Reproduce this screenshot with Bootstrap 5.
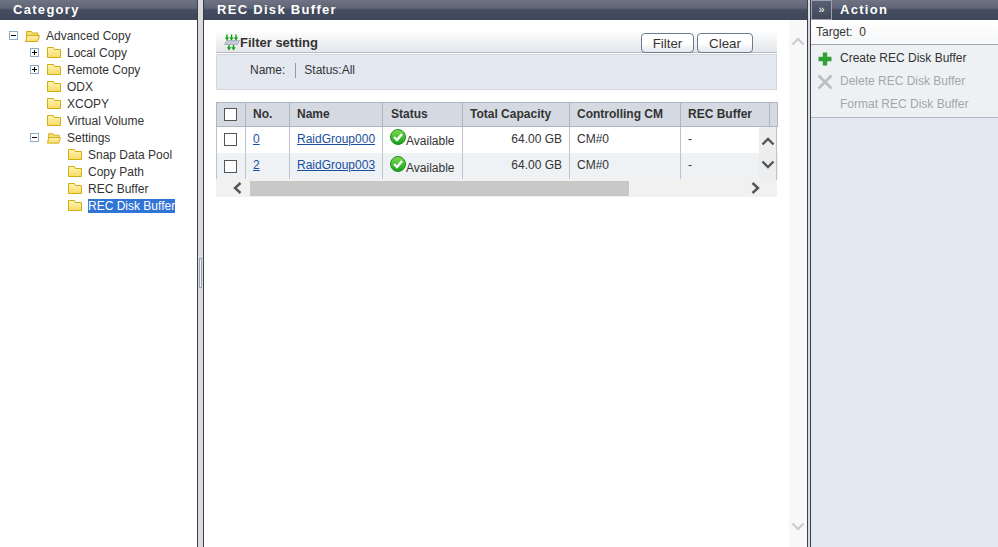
<!DOCTYPE html>
<html lang="en">
<head>
<meta charset="utf-8">
<title>REC Disk Buffer</title>
<link href="https://cdn.jsdelivr.net/npm/bootstrap@5.3.0/dist/css/bootstrap.min.css" rel="stylesheet">
<style>
html,body{height:100%;overflow:hidden}
body{font-family:"Liberation Sans",Arial,sans-serif;font-size:12px;color:#333;background:#fff;line-height:17px}
.shell{width:998px;height:547px}
.pane-left{width:197px}
.pane-main{width:603px}
.pane-right{width:187px;background:#e4e8f0}
.split{width:7px;background:#dcdcdc;border-left:1px solid #3a4050;border-right:1px solid #3a4050;display:flex;align-items:center;justify-content:center}
.split-r{width:4px}
.grip{display:block;width:3px;height:30px;border:1px solid #9aa2ae;background:#eef0f3;margin-top:-1px}
.head{height:20px;background:linear-gradient(#6f7484,#5f6576 40%,#444c5f 50%,#3f4759);color:#fff;font-weight:700;font-size:13px;letter-spacing:1.3px;line-height:19px;padding-left:13px}
.tree{padding-top:8px}
.trow{height:17px;display:flex;align-items:center;white-space:nowrap}
.tog{width:9px;height:9px;border:1px solid #8eabc4;background:#fff;position:relative;flex:none;margin-bottom:2px}
.tog::before{content:"";position:absolute;left:1px;top:3px;width:5px;height:1px;background:#000}
.tog.plus::after{content:"";position:absolute;left:3px;top:1px;width:1px;height:5px;background:#000}
.lv0{padding-left:9px}.lv0 .tog{margin-right:7px}
.lv1{padding-left:30px}.lv1 .tog{margin-right:8px}
.lv1n{padding-left:47px}
.lv2{padding-left:68px}
.fold{flex:none;margin-right:6px;margin-bottom:2px}
.sel{background:#3074d6;color:#fff;height:14px;line-height:14px;display:block;overflow:hidden;width:87px;margin-bottom:2px}
.main-body{height:527px}
.main-in{padding:10px 12px 0;width:585px;flex:none}
.filter-top{height:23px;background:linear-gradient(#fff,#e4e6ea);border-bottom:1px solid #b4bac4;padding-left:8px;width:561px}
.filter-ti{font-weight:700;font-size:13px;color:#333;line-height:17px;margin-bottom:1px}
.fbtn{font-size:13.33px;line-height:17px;color:#333;padding:0;height:20px;background:linear-gradient(#fff 50%,#e3e7ee);border:1px solid #6e7b8e;border-radius:4px;font-family:inherit;margin-bottom:-1px}
.f1{width:53px}.f2{width:56px}
.btns{gap:3px;margin-right:24px}
.filter-body{margin-top:1px;background:#e4e8f0;border:1px solid #d2d6dc;height:36px;padding:8px 0 0 33px;width:561px}
.nm{padding-right:10px;border-right:1px solid #9a9a9a;height:15px;line-height:15px;margin-right:8px}
.stt{line-height:15px}
.gridbox{width:561px;margin-top:12px;position:relative}
.grid{width:561px;border-collapse:collapse;table-layout:fixed;margin:0}
.grid th{background:#d5dae2;height:24px;font-weight:700;border:1px solid #aeb6c2;padding:0 0 0 7px;color:#333}
.grid td{height:26px;border-left:1px solid #bcc3ce;border-right:1px solid #bcc3ce;padding:0 0 0 7px;background:#fff;color:#333;vertical-align:middle}
.grid tr.alt td{background:#eef2f5}
.grid .edge-r{border-right:0;padding:0}
.grid th.th-status{padding-left:8px}
.c1{width:29px}.c2{width:44px}.c3{width:93px}.c4{width:80px}.c5{width:107px}.c6{width:111px}.c7{width:89px}.c8{width:8px}
.box{display:block;width:13px;height:13px;border:1px solid #555;background:#fff}
.alt .box{margin-top:2px}
.ctr{padding-left:7px!important}
.grid a{color:#1a4fa0}
.num{text-align:right;padding-right:7px!important}
.av{display:flex;align-items:flex-end;line-height:14px;height:19px;margin-bottom:3px}
.av svg{align-self:flex-start;flex:none}
.alt .av{margin-bottom:1px}
.vbar{position:absolute;right:0;top:25px;width:18px;height:53px;background:#ededed;border-right:1px solid #bcc3ce;padding-top:10px;gap:14px}
.hbar{height:18px;background:#f1f1f1;width:561px;padding-left:17px;padding-right:17px}
.hthumb{display:block;margin-left:8px;width:379px;height:15px;background:#c8c8c8;margin-top:1px;margin-right:auto}
.outer-sb{width:18px;background:#f8f8f8;padding:17px 2px 16px}
.expand{width:21px;height:20px;background:linear-gradient(#5a6072,#3f4759);border:1px solid #9aa2b0;color:#fff;font-size:11px;line-height:16px;text-align:center;flex:none}
.act-head{height:20px;background:linear-gradient(#6f7484,#5f6576 40%,#444c5f 50%,#3f4759)}
.act-ti{color:#fff;font-weight:700;font-size:13px;letter-spacing:1.3px;line-height:19px;padding-left:8px}
.target{height:25px;background:#fff linear-gradient(#fff,#f6f7f8);border-bottom:1px solid #a5a5a5;padding-left:5px;line-height:24px}
.acts{height:73px;background:#eef1f3;border-bottom:1px solid #b4bac4;padding-top:2px}
.act{height:23px;padding-left:6px;color:#333}
.act.off{color:#a6a6a6}
.ico-slot{width:23px;flex:none;display:flex;align-items:center}
</style>
</head>
<body>
<svg width="0" height="0" class="d-block"><defs>
<linearGradient id="fg" x1="0" y1="0" x2="0" y2="1"><stop offset="0" stop-color="#fef3b4"/><stop offset="1" stop-color="#f8dc66"/></linearGradient>
<linearGradient id="cg" x1="0" y1="0" x2="0" y2="1"><stop offset="0" stop-color="#7fdc4e"/><stop offset="1" stop-color="#14a01c"/></linearGradient>
<symbol id="fc" viewBox="0 0 14 11"><path d="M.5 10.500V.5h6l1 2h6v8z" fill="url(#fg)" stroke="#d0ae10"/></symbol>
<symbol id="fo" viewBox="0 0 15 12"><path d="M1.500 11V1.500h5l1 1.500h5.500v3" fill="#f6dd78" stroke="#d0ae10"/><path d="M.5 11.500l1.500-6h12.500l-2 6z" fill="url(#fg)" stroke="#d0ae10"/></symbol>
<symbol id="ok" viewBox="0 0 16 16"><circle cx="8" cy="8" r="7.500" fill="url(#cg)" stroke="#1b8f1f"/><path d="M4 8l3 3 5-6" stroke="#fff" stroke-width="2.400" fill="none"/></symbol>
</defs></svg>
<div class="shell d-flex">
  <div class="pane-left">
    <div class="head">Category</div>
    <div class="tree">
      <div class="trow lv0"><span class="tog"></span><svg class="fold" width="15" height="12"><use href="#fo"/></svg><span>Advanced Copy</span></div>
      <div class="trow lv1"><span class="tog plus"></span><svg class="fold" width="14" height="11"><use href="#fc"/></svg><span>Local Copy</span></div>
      <div class="trow lv1"><span class="tog plus"></span><svg class="fold" width="14" height="11"><use href="#fc"/></svg><span>Remote Copy</span></div>
      <div class="trow lv1n"><svg class="fold" width="14" height="11"><use href="#fc"/></svg><span>ODX</span></div>
      <div class="trow lv1n"><svg class="fold" width="14" height="11"><use href="#fc"/></svg><span>XCOPY</span></div>
      <div class="trow lv1n"><svg class="fold" width="14" height="11"><use href="#fc"/></svg><span>Virtual Volume</span></div>
      <div class="trow lv1"><span class="tog"></span><svg class="fold" width="14" height="12"><use href="#fo"/></svg><span>Settings</span></div>
      <div class="trow lv2"><svg class="fold" width="14" height="11"><use href="#fc"/></svg><span>Snap Data Pool</span></div>
      <div class="trow lv2"><svg class="fold" width="14" height="11"><use href="#fc"/></svg><span>Copy Path</span></div>
      <div class="trow lv2"><svg class="fold" width="14" height="11"><use href="#fc"/></svg><span>REC Buffer</span></div>
      <div class="trow lv2"><svg class="fold" width="14" height="11"><use href="#fc"/></svg><span class="sel">REC Disk Buffer</span></div>
    </div>
  </div>
  <div class="split"><span class="grip"></span></div>
  <div class="pane-main">
    <div class="head">REC Disk Buffer</div>
    <div class="main-body d-flex">
      <div class="main-in">
        <div class="filter-top d-flex justify-content-between align-items-end">
          <div class="filter-ti d-flex align-items-center"><svg width="16" height="17" viewBox="0 0 16 17"><path d="M2.500 6.500h13L13.500 10.500H.5z" fill="#c3cad4" stroke="#8d98a6" stroke-width=".6"/><path d="M3 .5v4M7.500 .5v4M12 .5v4M5 11v3M9.500 11v3" stroke="#12a012" stroke-width="1.400" fill="none"/><path d="M.8 3.500h4.400L3 6.500zM5.300 3.500h4.400L7.500 6.500zM9.800 3.500h4.400L12 6.500zM2.800 13.300h4.400L5 16.500zM7.300 13.300h4.400L9.500 16.500z" fill="#12a012"/></svg><span>Filter setting</span></div>
          <div class="btns d-flex"><button type="button" class="fbtn f1">Filter</button><button type="button" class="fbtn f2">Clear</button></div>
        </div>
        <div class="filter-body d-flex"><span class="nm">Name:</span><span class="stt">Status:All</span></div>
        <div class="gridbox">
          <table class="grid">
            <colgroup><col class="c1"><col class="c2"><col class="c3"><col class="c4"><col class="c5"><col class="c6"><col class="c7"><col class="c8"></colgroup>
            <thead><tr><th class="ctr"><span class="box"></span></th><th>No.</th><th>Name</th><th class="th-status">Status</th><th>Total Capacity</th><th>Controlling CM</th><th>REC Buffer</th><th></th></tr></thead>
            <tbody>
              <tr><td class="ctr"><span class="box"></span></td><td><a href="#">0</a></td><td><a href="#">RaidGroup000</a></td><td><div class="av"><svg width="16" height="16"><use href="#ok"/></svg><span>Available</span></div></td><td class="num">64.00 GB</td><td>CM#0</td><td>-</td><td class="edge-r"></td></tr>
              <tr class="alt"><td class="ctr"><span class="box"></span></td><td><a href="#">2</a></td><td><a href="#">RaidGroup003</a></td><td><div class="av"><svg width="16" height="16"><use href="#ok"/></svg><span>Available</span></div></td><td class="num">64.00 GB</td><td>CM#0</td><td>-</td><td class="edge-r"></td></tr>
            </tbody>
          </table>
          <div class="vbar d-flex flex-column align-items-center"><svg width="14" height="9" viewBox="0 0 14 9"><path d="M1.500 7.500L7 2l5.500 5.500" stroke="#555" stroke-width="2.400" fill="none"/></svg><svg width="14" height="9" viewBox="0 0 14 9"><path d="M1.500 1.500L7 7l5.500-5.500" stroke="#555" stroke-width="2.400" fill="none"/></svg></div>
          <div class="hbar d-flex align-items-center"><svg width="9" height="12" viewBox="0 0 9 12"><path d="M7.500 1L2 6l5.500 5" stroke="#555" stroke-width="2.400" fill="none"/></svg><span class="hthumb"></span><svg width="9" height="12" viewBox="0 0 9 12"><path d="M1.500 1L7 6l-5.500 5" stroke="#555" stroke-width="2.400" fill="none"/></svg></div>
        </div>
      </div>
      <div class="outer-sb d-flex flex-column justify-content-between"><svg width="14" height="9" viewBox="0 0 14 9"><path d="M1.500 7.500L7 2l5.500 5.500" stroke="#cfcfcf" stroke-width="2.400" fill="none"/></svg><svg width="14" height="9" viewBox="0 0 14 9"><path d="M1.500 1.500L7 7l5.500-5.500" stroke="#cfcfcf" stroke-width="2.400" fill="none"/></svg></div>
    </div>
  </div>
  <div class="split split-r"></div>
  <div class="pane-right">
    <div class="act-head d-flex"><div class="expand">»</div><div class="act-ti">Action</div></div>
    <div class="target">Target:&nbsp; 0</div>
    <div class="acts">
      <div class="act d-flex align-items-center"><span class="ico-slot"><svg width="16" height="16" viewBox="0 0 16 16"><path d="M8 1.500v13M1.500 8h13" stroke="#33a033" stroke-width="4.400"/></svg></span>Create REC Disk Buffer</div>
      <div class="act off d-flex align-items-center"><span class="ico-slot"><svg width="16" height="16" viewBox="0 0 16 16"><path d="M1.500 1.500l13 13M14.500 1.500l-13 13" stroke="#bdbdbd" stroke-width="2.800"/></svg></span>Delete REC Disk Buffer</div>
      <div class="act off d-flex align-items-center"><span class="ico-slot"></span>Format REC Disk Buffer</div>
    </div>
  </div>
</div>
<script src="https://cdn.jsdelivr.net/npm/bootstrap@5.3.0/dist/js/bootstrap.bundle.min.js"></script>
</body>
</html>
